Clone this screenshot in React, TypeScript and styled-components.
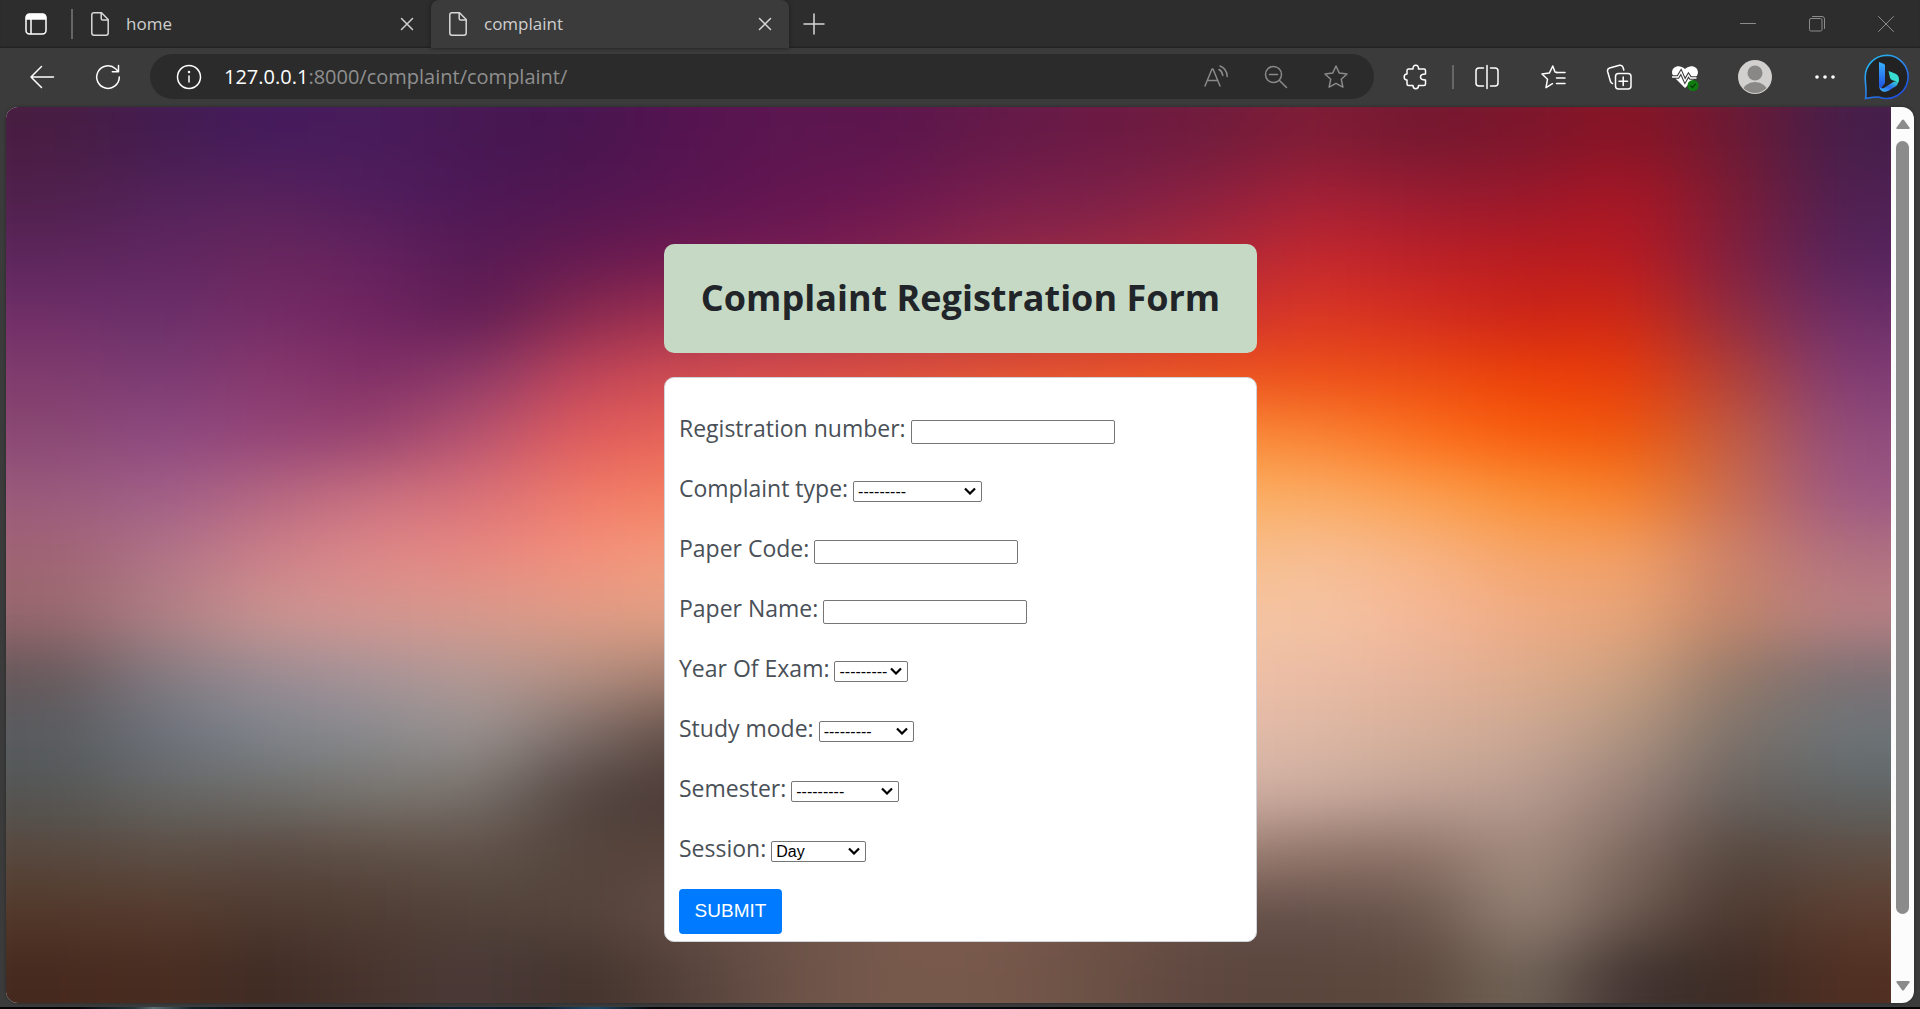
import React from "react";
import styled, { createGlobalStyle } from "styled-components";

const uiFont = `"Open Sans", "Noto Sans", sans-serif`;
const controlFont = `"Liberation Sans", Arial, sans-serif`;

const GlobalStyle = createGlobalStyle`
  *, *::before, *::after { box-sizing: border-box; }
  body { margin: 0; background: #3b3b3b; font-family: ${uiFont}; }
  button { font: inherit; color: inherit; background: none; border: 0; padding: 0; margin: 0; }
`;

const Browser = styled.div`
  display: flex;
  flex-direction: column;
  height: 100vh;
  overflow: hidden;
  background: #3b3b3b;
`;

const TabBar = styled.header`
  display: flex;
  align-items: stretch;
  flex: none;
  height: 48px;
  background: #2d2d2d;
  color: #d0d0d0;
  box-shadow: inset 0 -2px 2px -1px #202020;
`;

const IconButton = styled.button<{ $w: number; $tone?: string }>`
  display: flex;
  align-items: center;
  justify-content: center;
  flex: none;
  width: ${(p) => p.$w}px;
  color: ${(p) => p.$tone ?? "#ffffff"};
`;

const Divider = styled.span<{ $h: number }>`
  flex: none;
  align-self: center;
  width: 2px;
  height: ${(p) => p.$h}px;
  background: #666666;
`;

const Tab = styled.div<{ $active?: boolean }>`
  display: flex;
  align-items: center;
  flex: 0 1 358px;
  min-width: 0;
  padding-left: 18px;
  border-radius: 8px 8px 0 0;
  background: ${(p) => (p.$active ? "#3b3b3b" : "transparent")};
  box-shadow: ${(p) => (p.$active ? "0 0 4px #1c1c1c" : "none")};
`;

const TabTitle = styled.span`
  flex: 1;
  padding-left: 17px;
  font-size: 17px;
  line-height: 24px;
  color: #cfcfcf;
`;

const Spacer = styled.div`
  flex: 1;
`;

const Toolbar = styled.nav`
  display: flex;
  align-items: center;
  flex: none;
  height: 59px;
  padding: 0 7px 2px 9px;
  color: #ffffff;
`;

const AddressBar = styled.div`
  display: flex;
  align-items: center;
  flex: 1;
  min-width: 0;
  height: 45px;
  margin: 0 6px 0 9px;
  padding: 0 8px 0 21px;
  border-radius: 23px;
  background: #2b2b2b;
`;

const Url = styled.span`
  flex: 1;
  padding-left: 17px;
  font-size: 20px;
  line-height: 28px;
  color: #8f8f8f;
  white-space: nowrap;
  overflow: hidden;
`;

const Host = styled.span`
  color: #ffffff;
`;

const ProfileGroup = styled.div`
  display: flex;
  align-items: center;
  gap: 7px;
  padding-left: 2px;
`;

const Viewport = styled.div`
  display: flex;
  flex: 1;
  min-height: 0;
  margin: 0 6px 4px;
  border-radius: 12px;
  overflow: hidden;
  background: #fcfcfc;
  box-shadow: 0 0 3px #262626;
`;

const Page = styled.main`
  position: relative;
  display: flex;
  flex-direction: column;
  align-items: center;
  gap: 24px;
  flex: 1;
  min-width: 0;
  padding: 137px 0 0 24px;
  overflow: hidden;
`;

const Backdrop = styled.svg`
  position: absolute;
  inset: 0;
  width: 100%;
  height: 100%;
`;

const Banner = styled.div`
  position: relative;
  width: 593px;
  padding: 29px 16px 30px;
  border-radius: 10px;
  background: #c6d9c4;
  text-align: center;
`;

const Title = styled.h1`
  margin: 0;
  font-size: 36px;
  font-weight: 700;
  line-height: 50px;
  color: #212529;
  white-space: nowrap;
`;

const Card = styled.form`
  position: relative;
  width: 593px;
  padding: 22px 14px 7px;
  border: 1px solid #ced4da;
  border-radius: 10px;
  background: #ffffff;
`;

const Row = styled.div`
  display: flex;
  align-items: center;
  gap: 5px;
  height: 60px;
`;

const Label = styled.label`
  padding-bottom: 4px;
  font-size: 23px;
  line-height: 36px;
  color: #495057;
`;

const TextBox = styled.input`
  width: 204px;
  height: 24px;
  margin: 4px 0 0;
  padding: 1px 2px;
  border: 1px solid #767676;
  border-radius: 2px;
  background: #ffffff;
  font: 16px ${controlFont};
`;

const chevron = encodeURIComponent(
  `<svg xmlns="http://www.w3.org/2000/svg" width="12" height="8" viewBox="0 0 12 8"><path d="M1 1.500l5 5 5-5" fill="none" stroke="#000" stroke-width="2.200"/></svg>`
);

const Select = styled.select<{ $w: number }>`
  appearance: none;
  width: ${(p) => p.$w}px;
  height: 21px;
  margin: 2px 0 0;
  padding: 0 0 0 4px;
  border: 1px solid #767676;
  border-radius: 2px;
  background: #ffffff url("data:image/svg+xml,${chevron}") no-repeat right 5px center;
  color: #000000;
  font: 16px ${controlFont};
  line-height: 19px;
`;

const Submit = styled.button`
  display: block;
  width: 103px;
  height: 45px;
  margin-top: 9px;
  padding-bottom: 2px;
  border-radius: 4px;
  background: #007bff;
  color: #ffffff;
  font: 19px ${controlFont};
`;

const ScrollTrack = styled.div`
  display: flex;
  flex-direction: column;
  align-items: center;
  flex: none;
  width: 23px;
  padding: 12px 0;
`;

const ScrollArrow = styled.svg`
  flex: none;
  width: 14px;
  height: 10px;
  fill: #8b8b8b;
`;

const ScrollLane = styled.div`
  flex: 1;
  width: 13px;
  padding: 12px 0 67px;
`;

const ScrollThumb = styled.div`
  height: 100%;
  border-radius: 7px;
  background: #8b8b8b;
`;

const DesktopEdge = styled.div`
  flex: none;
  height: 2px;
  background: linear-gradient(90deg, #050508 4%, #26343a 7%, #5c7078 8%, #14222a 10%, #050508 13%, #08090e 20%, #0d2030 24%, #0c1a28 28%, #1d4a68 31%, #050508 34%, #08131c 43%, #050508 55%);
`;

/* Sunset colours, one string per row, left to right */
const sky = [
  "481d42 431c50 451b5c 491b5b 461852 481550 551450 5c1650 5c164c 641a48 6c1a44 701c3c 801c36 741830 7c162c 881424 6c1a34 451e4a",
  "50204c 52225a 58225c 501d5c 4c1856 521650 5a1652 641450 6c1850 781e4c 7c2048 8c2040 a42036 981c32 98182c a81624 7a1c34 4e2052",
  "5c265c 602660 68265c 64225e 561a54 641a50 701a50 741c54 80204e 902848 9a2844 ac2a3a c4282e bc2028 b81c20 b81a20 802040 56245c",
  "702e68 6a2f6a 752c66 702460 601e54 8a2a50 a03050 a83450 b03848 b83844 c03838 cc3030 dc3824 d42e20 cc2418 d02814 902c40 6c2e68",
  "803c6c 7a3c74 88386c 802f66 8e3a68 c0455a d04c50 d84c48 dc4c3c e25030 e85028 ec5420 ee5018 ec4c14 ec4008 e83c0c b04038 803c74",
  "8a4874 8e4a80 944478 98446f b85470 e05c5c e86458 f07050 f48050 f88848 fa9040 fa8c38 fa8434 fc701c f85c0c f0580c c05c44 904c7c",
  "9a5a7c a05e88 b46680 c87080 d87078 f07a68 f48060 f48860 f49060 f8a060 fab060 fab060 fbac64 fba050 fb9034 f88028 c86c50 9c5884",
  "a06474 b07488 cc8088 de8888 e88880 f4907c f49c7c f49c7c f4a47c f8b080 fabc88 fabc88 f6be94 f8b484 f6a468 f4a064 cc8068 b07080",
  "98686e b08084 cc9490 d49690 d89a8c e09c86 e4a284 e4a284 e4a284 f4c4a0 f4c4a0 f4c4a0 f4c4a4 f5b898 f0ac84 e8a478 c08468 b88084",
  "66585a 847c82 9a8c94 a89498 b49894 b49082 a88070 a88070 a88070 f0c0a8 f0c0a8 f0c0a8 ecbca4 e6b49c deac8c cca080 947868 7c7074",
  "585c60 6c727c 7e848c 888a8e 989290 7c6c68 604c44 604c44 604c44 e4bcac e4bcac e4bcac dcb8a4 d6b09a cca894 b09480 7c7068 6c7478",
  "545654 666664 6c6c68 78746e 78706a 52443f 4a3836 4a3836 4a3836 d0b0a4 d0b0a4 d0b0a4 ccaca0 c0a296 b89c90 988078 68605c 606464",
  "58483e 5c4e44 5a4a42 5e4e44 60524a 54443c 58443c 58443c 6c544a 7a5a4e a08074 a08074 907468 8c7268 a48c80 806a60 54463e 5e4e44",
  "52382a 563a2e 4e3a30 503e34 52423a 54443c 644e46 6c544a 7a5a4e 7a5a4e 705046 645048 64504a 6a564c 988478 6c5a50 4a382f 5c3e30",
  "46291e 4a2c20 3e2b24 48342e 4a3a38 43322c 54423a 6c5248 785a4c 76584a 6a5045 5c463e 5a463c 5c483c 74665a 403230 3c2b24 502f22",
].map((row) => row.split(" "));

function Sunset() {
  const columns = sky[0].length;
  const rows = sky.length;
  const cells = [];
  for (let r = -1; r <= rows; r++) {
    for (let c = -1; c <= columns; c++) {
      const row = Math.min(rows - 1, Math.max(0, r));
      const col = Math.min(columns - 1, Math.max(0, c));
      cells.push(
        <rect key={`${r}:${c}`} x={c * 105} y={r * 60} width="106" height="61" fill={`#${sky[row][col]}`} />
      );
    }
  }
  return (
    <Backdrop viewBox="0 0 1890 900" preserveAspectRatio="none" aria-hidden="true">
      <defs>
        <filter id="haze" x="-10%" y="-10%" width="120%" height="120%" colorInterpolationFilters="sRGB">
          <feGaussianBlur stdDeviation="46 27" />
        </filter>
      </defs>
      <g filter="url(#haze)">{cells}</g>
    </Backdrop>
  );
}

type GlyphProps = { size?: number; children: React.ReactNode; weight?: number };

const Glyph = ({ size = 26, children, weight = 1.5 }: GlyphProps) => (
  <svg
    width={size}
    height={size}
    viewBox={`0 0 ${size} ${size}`}
    fill="none"
    stroke="currentColor"
    strokeWidth={weight}
    strokeLinecap="round"
    strokeLinejoin="round"
    aria-hidden="true"
  >
    {children}
  </svg>
);

const PageGlyph = () => (
  <svg width="18" height="24" viewBox="0 0 18 24" fill="none" stroke="#d8d8d8" strokeWidth="1.5" strokeLinejoin="round" aria-hidden="true">
    <path d="M3 .8h7.5l6.7 6.7V21a2.2 2.2 0 0 1-2.2 2.2H3A2.2 2.2 0 0 1 .8 21V3A2.2 2.2 0 0 1 3 .8z" />
    <path d="M10.2.8v5.6a1.6 1.6 0 0 0 1.6 1.6h5.4" />
  </svg>
);

const CloseGlyph = () => (
  <Glyph size={14}>
    <path d="M1.5 1.5l11 11M12.5 1.5l-11 11" />
  </Glyph>
);

const StarPath = "M13 2l3.3 7.1 7.7.9-5.7 5.3 1.6 7.9L13 19.4l-6.9 3.8 1.6-7.9L2 10l7.7-.9z";

const BingGlyph = () => (
  <svg width="45" height="46" viewBox="0 0 45 46" aria-hidden="true">
    <defs>
      <linearGradient id="ring" x1="0" y1="0" x2=".7" y2="1">
        <stop offset="0" stopColor="#22c0ee" />
        <stop offset=".5" stopColor="#2b8df0" />
        <stop offset="1" stopColor="#1d4fe0" />
      </linearGradient>
      <linearGradient id="stem" x1="0" y1="0" x2="0" y2="1">
        <stop offset="0" stopColor="#37b2ff" />
        <stop offset="1" stopColor="#1f4be0" />
      </linearGradient>
      <linearGradient id="bowl" x1="0" y1="1" x2="1" y2="0">
        <stop offset="0" stopColor="#3cc0ff" />
        <stop offset=".5" stopColor="#2a6cf0" />
        <stop offset="1" stopColor="#38d8d0" />
      </linearGradient>
    </defs>
    <path d="M23 1.2a21.6 21.6 0 1 1-7.6 42C11 42.600 6 43.800 1.500 44.500 3 39 1.200 30 1.200 23A21.800 21.800 0 0 1 23 1.200z" fill="#222222" stroke="url(#ring)" strokeWidth="1.600" />
    <path d="M15 8l4.500 1.800c1 .4 1.500 1 1.500 2V29l-4.500 6c-1-.8-1.500-2-1.500-3.500z" fill="url(#stem)" />
    <path d="M24.500 17l6.500 2.500c2.600 1.100 4 3.200 4 6 0 2-.6 3.300-1.500 4.300-1-2-2.500-2.800-5-3.600-1.500-.5-2-1.200-2.500-2.500z" fill="#38dcd0" />
    <path d="M15.200 32c.8 2 3 3 5.200 1.800L30 27.500c2.500.5 4 1.500 3.500 2.800-.5 1.200-1.400 1.800-2.500 2.500l-6.500 4c-4.500 2.500-9 .2-9.300-4.800z" fill="url(#bowl)" />
  </svg>
);

type Field = { id: string; label: string; width?: number; options?: string[] };

const blank = "---------";

const fields: Field[] = [
  { id: "registration", label: "Registration number:" },
  { id: "type", label: "Complaint type:", width: 129, options: [blank] },
  { id: "code", label: "Paper Code:" },
  { id: "name", label: "Paper Name:" },
  { id: "year", label: "Year Of Exam:", width: 74, options: [blank] },
  { id: "mode", label: "Study mode:", width: 95, options: [blank] },
  { id: "semester", label: "Semester:", width: 108, options: [blank] },
  { id: "session", label: "Session:", width: 95, options: ["Day"] },
];

function FormRow({ id, label, width, options }: Field) {
  return (
    <Row>
      <Label htmlFor={id}>{label}</Label>
      {options ? (
        <Select id={id} $w={width ?? 95}>
          {options.map((option) => (
            <option key={option}>{option}</option>
          ))}
        </Select>
      ) : (
        <TextBox id={id} type="text" />
      )}
    </Row>
  );
}

function Tabs() {
  return (
    <TabBar>
      <IconButton $w={71} aria-label="Tab actions">
        <Glyph size={22}>
          <rect x="1" y="1" width="20" height="20" rx="3.500" />
          <path d="M1.500 4.500a3 3 0 0 1 3-3h13a3 3 0 0 1 3 3V6h-19z" fill="currentColor" />
          <path d="M6 6v14.500" />
        </Glyph>
      </IconButton>
      <Divider $h={30} />
      <Tab>
        <PageGlyph />
        <TabTitle>home</TabTitle>
        <IconButton $w={48} $tone="#d0d0d0" aria-label="Close home">
          <CloseGlyph />
        </IconButton>
      </Tab>
      <Tab $active>
        <PageGlyph />
        <TabTitle>complaint</TabTitle>
        <IconButton $w={48} $tone="#d8d8d8" aria-label="Close complaint">
          <CloseGlyph />
        </IconButton>
      </Tab>
      <IconButton $w={50} $tone="#d8d8d8" aria-label="New tab">
        <Glyph size={22}>
          <path d="M11 1v20M1 11h20" />
        </Glyph>
      </IconButton>
      <Spacer />
      <IconButton $w={69} $tone="#8c8c8c" aria-label="Minimize">
        <Glyph size={16} weight={1}>
          <path d="M.5 7.500h15" />
        </Glyph>
      </IconButton>
      <IconButton $w={69} $tone="#8c8c8c" aria-label="Restore">
        <Glyph size={16} weight={1}>
          <rect x=".5" y="2.500" width="12.500" height="12.500" rx="1.500" />
          <path d="M3.500.5H13A2.500 2.500 0 0 1 15.500 3v9.500" />
        </Glyph>
      </IconButton>
      <IconButton $w={69} $tone="#8c8c8c" aria-label="Close window">
        <Glyph size={16} weight={1}>
          <path d="M.5.5l15 15M15.500.5l-15 15" />
        </Glyph>
      </IconButton>
    </TabBar>
  );
}

function Tools() {
  return (
    <Toolbar>
      <IconButton $w={66} aria-label="Back">
        <Glyph>
          <path d="M24.500 13H2M12.500 2.500L2 13l10.500 10.500" />
        </Glyph>
      </IconButton>
      <IconButton $w={66} aria-label="Refresh">
        <Glyph>
          <path d="M24.300 13A11.300 11.300 0 1 1 20.600 4.700L23.300 7.500M23.500 1.500v6.200h-6.200" />
        </Glyph>
      </IconButton>
      <AddressBar>
        <IconButton $w={36} aria-label="Site information">
          <Glyph>
            <circle cx="13" cy="13" r="11.500" />
            <path d="M13 12v6" />
            <circle cx="13" cy="8" r=".5" fill="currentColor" />
          </Glyph>
        </IconButton>
        <Url>
          <Host>127.0.0.1</Host>:8000/complaint/complaint/
        </Url>
        <IconButton $w={60} $tone="#8a8a8a" aria-label="Read aloud">
          <Glyph>
            <path d="M2 22L9 5h1l7 17M4.500 16.500h10M16 5.500c2 1 3.500 3.500 3.800 6M17 2c4 1.500 7 5.500 7.200 10.500" />
          </Glyph>
        </IconButton>
        <IconButton $w={60} $tone="#8a8a8a" aria-label="Zoom">
          <Glyph>
            <circle cx="10.500" cy="10.500" r="8" />
            <path d="M6.500 10.500h8M16.500 16.500l7 7" />
          </Glyph>
        </IconButton>
        <IconButton $w={60} $tone="#8a8a8a" aria-label="Add to favorites">
          <Glyph>
            <path d={StarPath} />
          </Glyph>
        </IconButton>
      </AddressBar>
      <IconButton $w={72} aria-label="Extensions">
        <Glyph>
          <path d="M5.500 5H10c-.3-2 .8-3.700 2.800-3.700S15.800 3 15.500 5H21a1.500 1.500 0 0 1 1.500 1.500V10c-3 0-5 1-5 3s2 3 5 3v4a1.500 1.500 0 0 1-1.500 1.500h-5.500c0 2-1 3.200-2.700 3.200S10 23.500 10 21.500H5.500A1.500 1.500 0 0 1 4 20v-4c-1.800 0-2.800-1.300-2.800-3S2.200 10 4 10V6.500A1.500 1.500 0 0 1 5.500 5z" />
        </Glyph>
      </IconButton>
      <Divider $h={24} />
      <IconButton $w={66} aria-label="Split screen">
        <Glyph>
          <path d="M9.500 4H5a3 3 0 0 0-3 3v12a3 3 0 0 0 3 3h4.500M16.500 4H21a3 3 0 0 1 3 3v12a3 3 0 0 1-3 3h-4.500M13 1.500v23" />
        </Glyph>
      </IconButton>
      <IconButton $w={66} aria-label="Favorites">
        <Glyph>
          <path d="M17 8.500l-2-.4L12.800 2 9.300 9.100l-7.300.9 5.500 5.300L6 23.700l6.500-4" />
          <path d="M16.500 8.500h8.500M16.500 14h8.500M16.500 19.500h8.500" />
        </Glyph>
      </IconButton>
      <IconButton $w={66} aria-label="Collections">
        <Glyph>
          <rect x="9.500" y="9.500" width="15.500" height="15.500" rx="3" />
          <path d="M17.200 13v8.500M13 17.200h8.500M6.500 19.500a3 3 0 0 1-2-2L1.600 7.500a3 3 0 0 1 2-3.500l9.900-2.700a3 3 0 0 1 3.500 2l.8 2.700" />
        </Glyph>
      </IconButton>
      <IconButton $w={66} aria-label="Browser essentials">
        <svg width="28" height="28" viewBox="0 0 28 28" fill="none" aria-hidden="true">
          <path d="M14 25L3 14C-3 7 6-1 14 6 22-1 31 7 25 14z" fill="#ffffff" />
          <path d="M0 14h7l3-5 4 9 3.500-6 2 3h8" stroke="#3b3b3b" strokeWidth="3.500" />
          <path d="M1 14h6l3-5 4 9 3.500-6 2 3h6" stroke="#ffffff" strokeWidth="1.300" />
          <circle cx="22" cy="22.500" r="5.500" fill="#107c10" />
          <path d="M19.500 22.500l2 2 3.200-3.800" stroke="#0a3a0a" strokeWidth="1.300" />
        </svg>
      </IconButton>
      <ProfileGroup>
        <IconButton $w={69} aria-label="Profile">
          <svg width="34" height="34" viewBox="0 0 34 34" aria-hidden="true">
            <clipPath id="disc">
              <circle cx="17" cy="17" r="16" />
            </clipPath>
            <circle cx="17" cy="17" r="17" fill="#d2d0ce" />
            <circle cx="17" cy="13" r="7.500" fill="#8a8886" />
            <ellipse cx="17" cy="32" rx="12.500" ry="10" fill="#8a8886" clipPath="url(#disc)" />
          </svg>
        </IconButton>
        <IconButton $w={57} aria-label="Settings and more">
          <svg width="22" height="6" viewBox="0 0 22 6" fill="#ffffff" aria-hidden="true">
            <circle cx="3" cy="3" r="1.800" />
            <circle cx="11" cy="3" r="1.800" />
            <circle cx="19" cy="3" r="1.800" />
          </svg>
        </IconButton>
        <IconButton $w={53} aria-label="Bing chat">
          <BingGlyph />
        </IconButton>
      </ProfileGroup>
    </Toolbar>
  );
}

export default function App() {
  return (
    <Browser>
      <GlobalStyle />
      <Tabs />
      <Tools />
      <Viewport>
        <Page>
          <Sunset />
          <Banner>
            <Title>Complaint Registration Form</Title>
          </Banner>
          <Card onSubmit={(event) => event.preventDefault()}>
            {fields.map((field) => (
              <FormRow key={field.id} {...field} />
            ))}
            <Submit type="submit">SUBMIT</Submit>
          </Card>
        </Page>
        <ScrollTrack>
          <ScrollArrow viewBox="0 0 14 10">
            <path d="M6 1a1.300 1.300 0 0 1 2 0l5.500 7.500q.5 1.500-1 1.500h-11q-1.500 0-1-1.500z" />
          </ScrollArrow>
          <ScrollLane>
            <ScrollThumb />
          </ScrollLane>
          <ScrollArrow viewBox="0 0 14 10">
            <path d="M6 9a1.300 1.300 0 0 0 2 0l5.500-7.500q.5-1.500-1-1.500h-11q-1.500 0-1 1.500z" />
          </ScrollArrow>
        </ScrollTrack>
      </Viewport>
      <DesktopEdge />
    </Browser>
  );
}
